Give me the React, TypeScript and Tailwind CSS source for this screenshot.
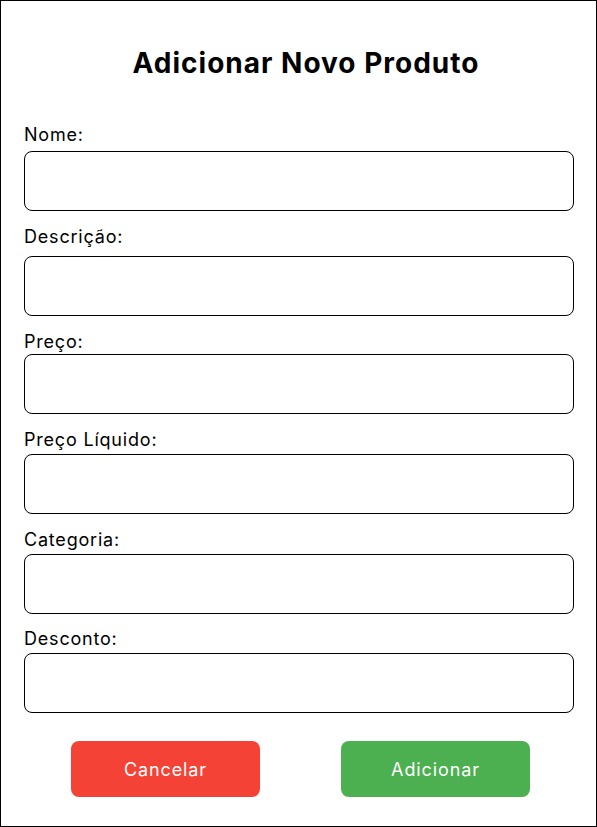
const fields = [
  { label: "Nome:", top: "", gap: "mb-[5px]" },
  { label: "Descrição:", top: "mt-[15px]", gap: "mb-[8px]" },
  { label: "Preço:", top: "mt-[15px]", gap: "mb-[1px]" },
  { label: "Preço Líquido:", top: "mt-[15px]", gap: "mb-[3px]" },
  { label: "Categoria:", top: "mt-[15px]", gap: "mb-[3px]" },
  { label: "Desconto:", top: "mt-[14px]", gap: "mb-[3px]" },
];

export default function App() {
  return (
    <div
      className="w-[597px] h-[827px] border border-black bg-white text-black"
      style={{ fontFamily: "Inter, 'Noto Sans', sans-serif" }}
    >
      <form className="flex flex-col pt-[45px] pl-[23px] pr-[22px]">
        {/* Title */}
        <h1 className="text-[28px] leading-[34px] font-bold tracking-[1px] text-center pl-[14px] mb-[44px]">
          Adicionar Novo Produto
        </h1>

        {/* Fields */}
        <div className="flex flex-col">
          {fields.map((f) => (
            <div key={f.label} className={`flex flex-col ${f.top}`}>
              <label className={`text-[18px] leading-[22px] tracking-[0.8px] ${f.gap}`}>{f.label}</label>
              <input
                type="text"
                className="h-[60px] w-[550px] rounded-lg border border-black bg-white px-3 outline-none"
              />
            </div>
          ))}
        </div>

        {/* Actions */}
        <div className="flex gap-[81px] pl-[47px] mt-[28px]">
          <button
            type="button"
            className="w-[189px] h-[56px] rounded-lg bg-[#f44336] text-white text-[18px] tracking-[0.9px]"
          >
            Cancelar
          </button>
          <button
            type="button"
            className="w-[189px] h-[56px] rounded-lg bg-[#4caf50] text-white text-[18px] tracking-[0.9px]"
          >
            Adicionar
          </button>
        </div>
      </form>
    </div>
  );
}
